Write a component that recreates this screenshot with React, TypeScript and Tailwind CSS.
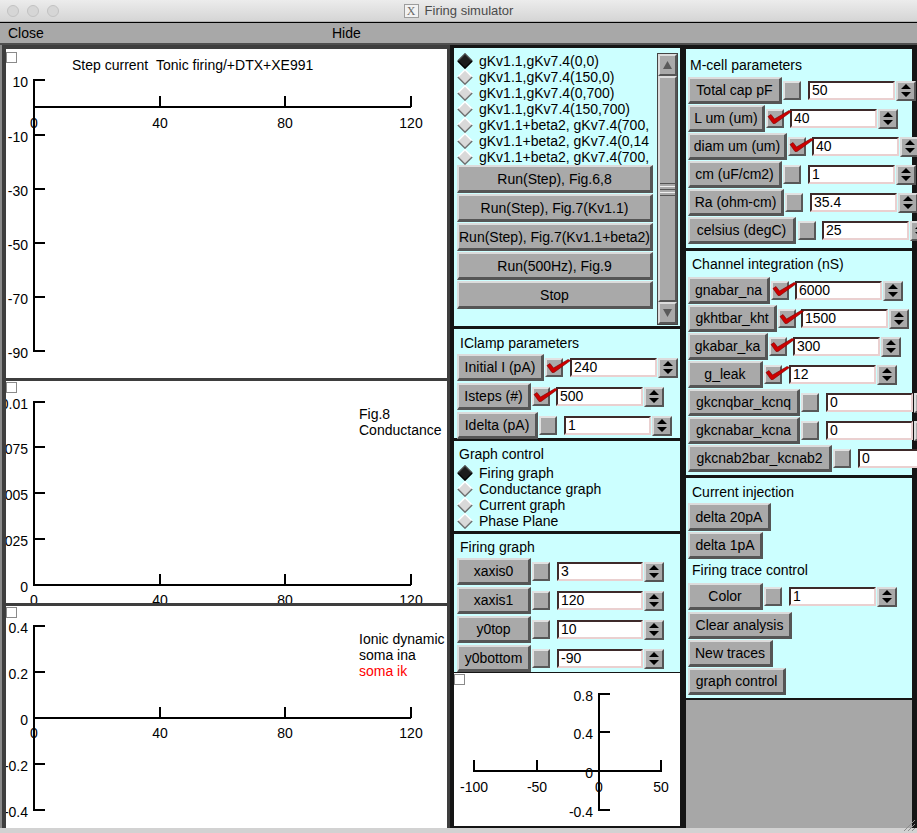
import React from "react";

type Tick = [number, string];

function Btn({ w, h = "h-[27px]", children }: { w: string; h?: string; children: React.ReactNode }) {
  return (
    <div
      className={`${w} ${h} shrink-0 flex items-center justify-center bg-[#a9a9a9] border-t-2 border-l-2 border-t-[#dcdcdc] border-l-[#dcdcdc] border-b-[3px] border-r-[3px] border-b-[#555555] border-r-[#555555] text-[14px] leading-none text-black whitespace-nowrap`}
    >
      {children}
    </div>
  );
}

function Check({ checked }: { checked?: boolean }) {
  return (
    <div className="relative w-[18px] h-[19px] shrink-0 bg-[#a9a9a9] border-2 border-t-[#e2e2e2] border-l-[#e2e2e2] border-b-[#585858] border-r-[#585858]">
      {checked && (
        <svg className="absolute left-[-2px] top-[-2px] overflow-visible" width="28" height="18" viewBox="0 0 28 18">
          <path d="M2,7.5 L5,5.5 L8.5,10 L23,1.5 L25.5,2.5 L9,14.5 L7,14.5 Z" fill="#cc0000" stroke="#7a0000" strokeWidth="0.6" />
        </svg>
      )}
    </div>
  );
}

function Field({ value, w = "w-[87px]" }: { value: string; w?: string }) {
  return (
    <div
      className={`${w} h-[19px] shrink-0 bg-white border-2 border-t-[#3e2a2a] border-l-[#3e2a2a] border-b-[#ead0d0] border-r-[#ead0d0] text-[14px] leading-[15px] pl-[2px] text-black overflow-hidden whitespace-nowrap`}
    >
      {value}
    </div>
  );
}

function Spin() {
  return (
    <div className="w-[20px] h-[20px] shrink-0 flex items-center justify-center bg-[#a9a9a9] border-2 border-t-[#dcdcdc] border-l-[#dcdcdc] border-b-[#555555] border-r-[#555555]">
      <svg width="10" height="13" viewBox="0 0 10 13">
        <path d="M5,0 L10,5 L0,5 Z M0,8 L10,8 L5,13 Z" fill="#000" />
      </svg>
    </div>
  );
}

type RowDef = {
  label: string;
  bw: string;
  checked?: boolean;
  cbm: string;
  inm: string;
  value: string;
  spin?: boolean;
  iw?: string;
};

function Row({ r }: { r: RowDef }) {
  return (
    <div className="flex items-center h-[27px] shrink-0">
      <Btn w={r.bw}>{r.label}</Btn>
      <div className={r.cbm}>
        <Check checked={r.checked} />
      </div>
      <div className={r.inm}>
        <Field value={r.value} w={r.iw} />
      </div>
      {r.spin !== false && (
        <div className="ml-[1px]">
          <Spin />
        </div>
      )}
    </div>
  );
}

function Diamond({ on }: { on?: boolean }) {
  return (
    <svg width="16" height="16" viewBox="0 0 16 16" className="shrink-0">
      <polygon points="8,0.8 15.2,8 8,15.2 0.8,8" fill={on ? "#1c1c1c" : "#d9d9d9"} />
      <polyline points="0.8,8 8,0.8 15.2,8" fill="none" stroke={on ? "#4a4a4a" : "#ffffff"} strokeWidth="1.4" />
      <polyline points="0.8,8 8,15.2 15.2,8" fill="none" stroke={on ? "#000000" : "#6e6e6e"} strokeWidth="1.4" />
    </svg>
  );
}

function Radio({ on, label }: { on?: boolean; label: string }) {
  return (
    <div className="flex items-center h-[16px] gap-[6px] text-[14px] leading-none whitespace-nowrap">
      <Diamond on={on} />
      <span>{label}</span>
    </div>
  );
}

type GraphProps = {
  w: number;
  h: number;
  cbY: number;
  ax: number;
  yTop: number;
  yBot: number;
  yTicks: Tick[];
  yLabelX: number;
  xAxisY: number;
  xLeft: number;
  xRight: number;
  xTicks: Tick[];
  xLabelY: number;
  texts?: { x: number; y: number; t: string; c?: string }[];
};

function Graph(p: GraphProps) {
  return (
    <svg width={p.w} height={p.h} className="block" fontFamily="'Liberation Sans', Arial, sans-serif" fontSize="14">
      <rect x="0.5" y={p.cbY + 0.5} width="10" height="10" fill="#ffffff" stroke="#8a8a8a" />
      <line x1={p.ax + 1} y1={p.yTop} x2={p.ax + 1} y2={p.yBot + 1} stroke="#000" strokeWidth="2" />
      {p.yTicks.map(([y, l]) => (
        <g key={"y" + l}>
          <line x1={p.ax} y1={y + 1} x2={p.ax + 12} y2={y + 1} stroke="#000" strokeWidth="2" />
          <text x={p.yLabelX} y={y + 8} textAnchor="end" fill="#000">
            {l}
          </text>
        </g>
      ))}
      <line x1={p.xLeft} y1={p.xAxisY + 1} x2={p.xRight + 1} y2={p.xAxisY + 1} stroke="#000" strokeWidth="2" />
      {p.xTicks.map(([x, l]) => (
        <g key={"x" + l}>
          <line x1={x + 1} y1={p.xAxisY - 10} x2={x + 1} y2={p.xAxisY + 1} stroke="#000" strokeWidth="2" />
          <text x={x + 1} y={p.xLabelY} textAnchor="middle" fill="#000">
            {l}
          </text>
        </g>
      ))}
      {p.texts?.map((t) => (
        <text key={t.t} x={t.x} y={t.y} fill={t.c ?? "#000"}>
          {t.t}
        </text>
      ))}
    </svg>
  );
}

function TitleBar() {
  return (
    <div className="relative h-[22px] bg-gradient-to-b from-[#ececec] to-[#d5d5d5] border-b border-[#b3b3b3] flex items-center">
      <div className="flex gap-[8px] pl-[7px]">
        <div className="w-[12px] h-[12px] rounded-full bg-[#d6d6d6] border border-[#c2c2c2]" />
        <div className="w-[12px] h-[12px] rounded-full bg-[#d6d6d6] border border-[#c2c2c2]" />
        <div className="w-[12px] h-[12px] rounded-full bg-[#d6d6d6] border border-[#c2c2c2]" />
      </div>
      <div className="absolute inset-0 flex items-center justify-center gap-[6px]">
        <div className="w-[15px] h-[14px] border border-[#9c9c9c] bg-[#f2f2f2] flex items-center justify-center text-[12px] leading-none text-[#6a6a6a] font-['Liberation_Serif',serif]">
          X
        </div>
        <span className="text-[13px] text-[#4b4b4b]">Firing simulator</span>
      </div>
    </div>
  );
}

function MenuBar() {
  return (
    <div className="h-[23px] border-t border-black bg-[#a8a8a8] border-b-2 border-b-[#4e4e4e] flex items-center pl-[8px] text-[14px] pt-[1px]">
      <span className="w-[324px]">Close</span>
      <span>Hide</span>
    </div>
  );
}

const ICLAMP: RowDef[] = [
  { label: "Initial I (pA)", bw: "w-[87px]", checked: true, cbm: "ml-[1px]", inm: "ml-[7px]", value: "240" },
  { label: "Isteps (#)", bw: "w-[74px]", checked: true, cbm: "ml-[1px]", inm: "ml-[6px]", value: "500" },
  { label: "Idelta (pA)", bw: "w-[81px]", cbm: "ml-[1px]", inm: "ml-[7px]", value: "1" },
];

const FIRING: RowDef[] = [
  { label: "xaxis0", bw: "w-[74px]", cbm: "ml-[1px]", inm: "ml-[7px]", value: "3", iw: "w-[86px]" },
  { label: "xaxis1", bw: "w-[74px]", cbm: "ml-[1px]", inm: "ml-[7px]", value: "120", iw: "w-[86px]" },
  { label: "y0top", bw: "w-[74px]", cbm: "ml-[1px]", inm: "ml-[7px]", value: "10", iw: "w-[86px]" },
  { label: "y0bottom", bw: "w-[74px]", cbm: "ml-[1px]", inm: "ml-[7px]", value: "-90", iw: "w-[86px]" },
];

const MCELL: RowDef[] = [
  { label: "Total cap pF", bw: "w-[94px]", cbm: "ml-[1px]", inm: "ml-[7px]", value: "50" },
  { label: "L um (um)", bw: "w-[77px]", checked: true, cbm: "ml-[1px]", inm: "ml-[6px]", value: "40" },
  { label: "diam um (um)", bw: "w-[99px]", checked: true, cbm: "ml-[1px]", inm: "ml-[6px]", value: "40" },
  { label: "cm (uF/cm2)", bw: "w-[94px]", cbm: "ml-[1px]", inm: "ml-[7px]", value: "1" },
  { label: "Ra (ohm-cm)", bw: "w-[96px]", cbm: "ml-[1px]", inm: "ml-[7px]", value: "35.4" },
  { label: "celsius (degC)", bw: "w-[108px]", cbm: "ml-[2px]", inm: "ml-[6px]", value: "25" },
];

const CHANNEL: RowDef[] = [
  { label: "gnabar_na", bw: "w-[82px]", checked: true, cbm: "ml-[1px]", inm: "ml-[6px]", value: "6000" },
  { label: "gkhtbar_kht", bw: "w-[89px]", checked: true, cbm: "ml-[1px]", inm: "ml-[5px]", value: "1500" },
  { label: "gkabar_ka", bw: "w-[80px]", checked: true, cbm: "ml-[1px]", inm: "ml-[6px]", value: "300" },
  { label: "g_leak", bw: "w-[75px]", checked: true, cbm: "ml-[1px]", inm: "ml-[7px]", value: "12" },
  { label: "gkcnqbar_kcnq", bw: "w-[112px]", cbm: "ml-[1px]", inm: "ml-[7px]", value: "0" },
  { label: "gkcnabar_kcna", bw: "w-[112px]", cbm: "ml-[1px]", inm: "ml-[7px]", value: "0" },
  { label: "gkcnab2bar_kcnab2", bw: "w-[144px]", cbm: "ml-[1px]", inm: "ml-[7px]", value: "0" },
];

function LeftCol() {
  const xt: Tick[] = [
    [27, "0"],
    [153, "40"],
    [278, "80"],
    [404, "120"],
  ];
  return (
    <div className="w-[450px] shrink-0 flex flex-col gap-[3px] pt-[4px] pl-[4px] pr-[3px] border-l-2 border-[#8a8a8a]">
      <div className="h-[329px] bg-white overflow-hidden">
        <Graph
          w={441}
          h={329}
          cbY={3}
          ax={27}
          yTop={30}
          yBot={301}
          yTicks={[
            [30, "10"],
            [85, "-10"],
            [139, "-30"],
            [193, "-50"],
            [247, "-70"],
            [301, "-90"],
          ]}
          yLabelX={22}
          xAxisY={57}
          xLeft={27}
          xRight={404}
          xTicks={xt}
          xLabelY={79}
          texts={[{ x: 66, y: 21, t: "Step current\u00a0\u00a0Tonic firing/+DTX+XE991" }]}
        />
      </div>
      <div className="h-[222px] bg-white overflow-hidden">
        <Graph
          w={441}
          h={222}
          cbY={1}
          ax={27}
          yTop={20}
          yBot={203}
          yTicks={[
            [20, "0.01"],
            [65, "0.0075"],
            [111, "0.005"],
            [157, "0.0025"],
            [203, "0"],
          ]}
          yLabelX={22}
          xAxisY={203}
          xLeft={27}
          xRight={404}
          xTicks={xt}
          xLabelY={224}
          texts={[
            { x: 353, y: 38, t: "Fig.8" },
            { x: 353, y: 54, t: "Conductance" },
          ]}
        />
      </div>
      <div className="h-[222px] bg-white overflow-hidden">
        <Graph
          w={441}
          h={222}
          cbY={1}
          ax={27}
          yTop={19}
          yBot={203}
          yTicks={[
            [19, "0.4"],
            [65, "0.2"],
            [111, "0"],
            [157, "-0.2"],
            [203, "-0.4"],
          ]}
          yLabelX={22}
          xAxisY={111}
          xLeft={27}
          xRight={404}
          xTicks={xt}
          xLabelY={132}
          texts={[
            { x: 353, y: 38, t: "Ionic dynamic" },
            { x: 353, y: 54, t: "soma ina" },
            { x: 353, y: 70, t: "soma ik", c: "#ff0000" },
          ]}
        />
      </div>
    </div>
  );
}

function ScrollBar() {
  return (
    <div className="w-[21px] h-[272px] ml-[1px] mt-[5px] flex flex-col bg-[#7a7a7a] border border-[#444]">
      <div className="h-[22px] shrink-0 flex items-center justify-center bg-[#a9a9a9] border-2 border-t-[#dcdcdc] border-l-[#dcdcdc] border-b-[#555] border-r-[#555]">
        <svg width="9" height="8" viewBox="0 0 9 8">
          <path d="M4.5,0 L9,8 L0,8 Z" fill="#5a5a5a" />
        </svg>
      </div>
      <div className="flex-1 flex items-center justify-center bg-[#a9a9a9] border-2 border-t-[#dcdcdc] border-l-[#dcdcdc] border-b-[#555] border-r-[#555]">
        <div className="w-[15px] flex flex-col gap-[2px]">
          <div className="h-[1px] bg-[#555]" />
          <div className="h-[1px] bg-[#f0f0f0]" />
          <div className="h-[1px] bg-[#555]" />
          <div className="h-[1px] bg-[#f0f0f0]" />
          <div className="h-[1px] bg-[#555]" />
        </div>
      </div>
      <div className="h-[22px] shrink-0 flex items-center justify-center bg-[#a9a9a9] border-2 border-t-[#dcdcdc] border-l-[#dcdcdc] border-b-[#555] border-r-[#555]">
        <svg width="9" height="8" viewBox="0 0 9 8">
          <path d="M0,0 L9,0 L4.5,8 Z" fill="#5a5a5a" />
        </svg>
      </div>
    </div>
  );
}

function Title({ children, cls }: { children: React.ReactNode; cls: string }) {
  return <div className={`h-[18px] leading-[18px] text-[14px] whitespace-nowrap ${cls}`}>{children}</div>;
}

function MidCol() {
  const items = [
    "gKv1.1,gKv7.4(0,0)",
    "gKv1.1,gKv7.4(150,0)",
    "gKv1.1,gKv7.4(0,700)",
    "gKv1.1,gKv7.4(150,700)",
    "gKv1.1+beta2, gKv7.4(700,",
    "gKv1.1+beta2, gKv7.4(0,14",
    "gKv1.1+beta2, gKv7.4(700,",
  ];
  const runs = ["Run(Step), Fig.6,8", "Run(Step), Fig.7(Kv1.1)", "Run(Step), Fig.7(Kv1.1+beta2)", "Run(500Hz), Fig.9", "Stop"];
  return (
    <div className="w-[233px] shrink-0 flex flex-col pt-[3px] pl-[4px] pr-[3px] bg-[#151515]">
      <div className="h-[278px] shrink-0 bg-[#ccffff] flex">
        <div className="w-[201px] ml-[1px] flex flex-col">
          <div className="mt-[5px] h-[112px] pl-[2px] overflow-hidden flex flex-col">
            {items.map((t, i) => (
              <Radio key={i} on={i === 0} label={t} />
            ))}
          </div>
          <div className="ml-[2px] w-[196px] flex flex-col gap-[1px]">
            {runs.map((t) => (
              <Btn key={t} w="w-[196px]" h="h-[28px]">
                {t}
              </Btn>
            ))}
          </div>
        </div>
        <ScrollBar />
      </div>
      <div className="h-[109px] mt-[3px] shrink-0 bg-[#ccffff] pt-[5px] pl-[3px] flex flex-col">
        <Title cls="pl-[3px]">IClamp parameters</Title>
        <div className="mt-[2px] flex flex-col gap-[2px]">
          {ICLAMP.map((r) => (
            <Row key={r.label} r={r} />
          ))}
        </div>
      </div>
      <div className="h-[90px] mt-[3px] shrink-0 bg-[#ccffff] pt-[4px] pl-[3px] flex flex-col">
        <Title cls="pl-[2px]">Graph control</Title>
        <div className="mt-[2px] flex flex-col">
          <Radio on label="Firing graph" />
          <Radio label="Conductance graph" />
          <Radio label="Current graph" />
          <Radio label="Phase Plane" />
        </div>
      </div>
      <div className="h-[138px] mt-[3px] shrink-0 bg-[#ccffff] pt-[4px] pl-[3px] flex flex-col">
        <Title cls="pl-[3px]">Firing graph</Title>
        <div className="mt-[2px] flex flex-col gap-[2px]">
          {FIRING.map((r) => (
            <Row key={r.label} r={r} />
          ))}
        </div>
      </div>
      <div className="h-[153px] mt-[1px] shrink-0 bg-white overflow-hidden">
        <Graph
          w={226}
          h={153}
          cbY={1}
          ax={144}
          yTop={20}
          yBot={136}
          yTicks={[
            [20, "0.8"],
            [58, "0.4"],
            [97, "0"],
            [136, "-0.4"],
          ]}
          yLabelX={139}
          xAxisY={97}
          xLeft={19}
          xRight={207}
          xTicks={[
            [19, "-100"],
            [82, "-50"],
            [144, "0"],
            [206, "50"],
          ]}
          xLabelY={119}
        />
      </div>
    </div>
  );
}

function RightCol() {
  return (
    <div className="w-[234px] shrink-0 flex flex-col pt-[4px] pl-[3px] pr-[5px] bg-[#151515]">
      <div className="h-[199px] shrink-0 bg-[#ccffff] pt-[7px] pl-[2px] flex flex-col">
        <Title cls="pl-[2px]">M-cell parameters</Title>
        <div className="mt-[3px] flex flex-col gap-[1px]">
          {MCELL.map((r) => (
            <Row key={r.label} r={r} />
          ))}
        </div>
      </div>
      <div className="h-[224px] mt-[3px] shrink-0 bg-[#ccffff] pt-[4px] pl-[2px] flex flex-col">
        <Title cls="pl-[4px]">Channel integration (nS)</Title>
        <div className="mt-[4px] flex flex-col gap-[1px]">
          {CHANNEL.map((r) => (
            <Row key={r.label} r={r} />
          ))}
        </div>
      </div>
      <div className="h-[220px] mt-[3px] shrink-0 bg-[#ccffff] pt-[5px] pl-[2px] flex flex-col">
        <Title cls="pl-[4px]">Current injection</Title>
        <div className="mt-[2px]">
          <Btn w="w-[83px]" h="h-[28px]">
            delta 20pA
          </Btn>
        </div>
        <div className="mt-[1px]">
          <Btn w="w-[75px]">delta 1pA</Btn>
        </div>
        <Title cls="pl-[4px] mt-[2px]">Firing trace control</Title>
        <div className="mt-[4px]">
          <Row r={{ label: "Color", bw: "w-[75px]", cbm: "ml-[1px]", inm: "ml-[7px]", value: "1" }} />
        </div>
        <div className="mt-[2px]">
          <Btn w="w-[104px]">Clear analysis</Btn>
        </div>
        <div className="mt-[1px]">
          <Btn w="w-[85px]">New traces</Btn>
        </div>
        <div className="mt-[1px]">
          <Btn w="w-[98px]">graph control</Btn>
        </div>
      </div>
      <div className="flex-1 mt-[2px] mb-[0px] bg-[#a7a7a7]" />
    </div>
  );
}

export default function App() {
  return (
    <div className="w-[917px] h-[833px] overflow-hidden relative bg-[#d2d2d2] font-['Liberation_Sans',Arial,sans-serif] text-black select-none">
      <TitleBar />
      <MenuBar />
      <div className="flex h-[783px] bg-[#3e3e3e]">
        <LeftCol />
        <MidCol />
        <RightCol />
      </div>
      <div className="h-[5px] bg-[#d2d2d2]" />
      <svg className="absolute right-[1px] bottom-[1px]" width="15" height="15" viewBox="0 0 15 15">
        <line x1="14" y1="3" x2="3" y2="14" stroke="#8c8c8c" strokeWidth="1" />
        <line x1="14" y1="7" x2="7" y2="14" stroke="#8c8c8c" strokeWidth="1" />
        <line x1="14" y1="11" x2="11" y2="14" stroke="#8c8c8c" strokeWidth="1" />
      </svg>
    </div>
  );
}
